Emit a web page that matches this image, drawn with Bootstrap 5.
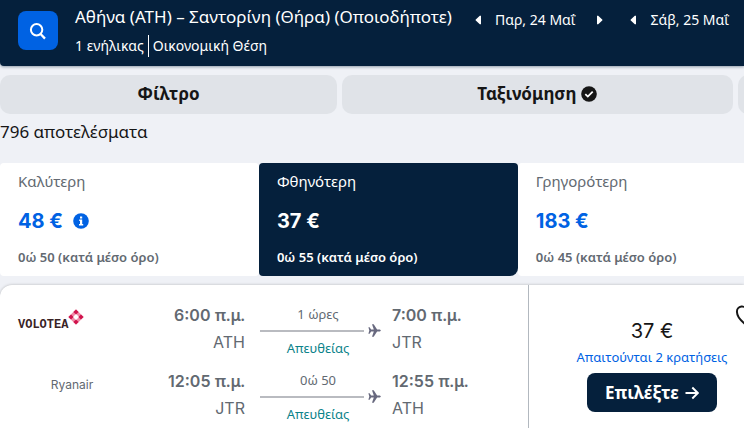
<!DOCTYPE html>
<html lang="el">
<head>
<meta charset="utf-8">
<meta name="viewport" content="width=device-width, initial-scale=1">
<title>Αθήνα – Σαντορίνη</title>
<link href="https://cdn.jsdelivr.net/npm/bootstrap@5.3.0/dist/css/bootstrap.min.css" rel="stylesheet">
<style>
  :root { --navy: #05203c; --blue: #0062e3; --grey: #626971; --page: #eff1f6; }
  body { background: var(--page); color: #161616; font-family: "Noto Sans", sans-serif; font-size: 16px; line-height: 24px; overflow: hidden; }
  svg { display: block; flex: none; }
  .num { font-family: Inter, "Noto Sans", sans-serif; }
  .top-bar { background: var(--navy); padding: 4px 0 9px 18px; box-shadow: 0 1px 3px #05203c66; border-bottom-left-radius: 4px; }
  .search-btn { width: 40px; height: 39px; padding: 0; margin-top: 7px; border-radius: 8px; background: var(--blue); color: #fff; }
  .trip { padding-left: 17px; width: 403px; }
  .trip-title { font-size: 17px; line-height: 26px; margin: 0; font-weight: 400; }
  .trip-info { font-size: 14px; line-height: 22px; margin-top: 5px; }
  .trip-info span + span { border-left: 1px solid #fff; padding-left: 4px; margin-left: 4px; }
  .dates { font-size: 14px; line-height: 20px; margin-top: 6px; }
  .date-nav { width: 34px; height: 20px; padding: 0; border: 0; background: none; color: #fff; }
  .date-next { margin-left: 7px; }
  .pills { gap: 5px; padding-top: 9px; }
  .pill { height: 39px; border: 0; border-radius: 10px; background: #e0e3e8; color: #161616; font-weight: 700; font-size: 17px; line-height: 22px; padding: 0 0 2px; flex: none; gap: 5px; }
  .pill-a { width: 45.3%; }
  .pill-b { width: 52.5%; }
  .results { margin: 6px 0 19px; font-size: 17px; }
  .sort-tab { flex: 0 0 34.8%; border: 0; background: #fff; color: var(--grey); text-align: left; padding: 7px 18px 9px; border-radius: 4px; height: 113px; }
  .sort-tab .kind { font-size: 15px; line-height: 20px; }
  .sort-tab .cost { font-size: 20px; line-height: 28px; font-weight: 700; color: var(--blue); margin-top: 16px; gap: 10px; }
  .sort-tab .avg { font-size: 13px; line-height: 18px; font-weight: 600; margin-top: 13px; }
  .sort-tab.active { background: var(--navy); color: #fff; border-radius: 4px 4px 8px 4px; }
  .sort-tab.active .cost { color: #fff; }
  .ticket { margin-top: 9px; background: #fff; border-radius: 12px 0 0 0; box-shadow: 0 0 3px #00000040; }
  .legs { flex: 0 0 71.1%; border-right: 1px solid #b2b8bf; padding: 18px 0 0 18px; color: var(--grey); }
  .leg { height: 66px; }
  .carrier { width: 108px; padding-top: 6px; }
  .brand { font: 700 12px/16px "Liberation Mono", monospace; color: #3a2326; padding-top: 8px; }
  .operator { font-size: 12px; line-height: 20px; text-align: center; }
  .stop { line-height: 24px; }
  .stop-time { font-weight: 600; }
  .stop-code { line-height: 30px; }
  .depart { width: 119px; text-align: right; }
  .path { width: 121px; margin: 0 11px 0 15px; font-size: 13px; line-height: 20px; padding-top: 1px; }
  .path-label { width: 116px; text-align: center; }
  .path-line { height: 2px; background: #b9bbc0; margin-right: 4px; }
  .direct { color: #0c838a; padding-top: 1px; }
  .buy { width: 246px; flex: none; position: relative; padding-top: 32px; }
  .total { font-size: 20px; line-height: 28px; }
  .need { font-size: 13px; line-height: 18px; color: var(--blue); padding-top: 3px; }
  .choose { background: var(--navy); color: #fff; font-weight: 700; font-size: 17px; width: 130px; height: 39px; border-radius: 8px; padding: 0; border: 0; margin-top: 7px; gap: 6px; }
  .save { position: absolute; top: 19px; right: 16px; padding: 0; border: 0; background: none; color: #161616; }
</style>
<script src="https://cdn.jsdelivr.net/npm/bootstrap@5.3.0/dist/js/bootstrap.bundle.min.js"></script>
</head>
<body>
<header class="top-bar d-flex text-white align-items-start">
  <button class="btn search-btn d-flex align-items-center justify-content-center flex-shrink-0" aria-label="Αναζήτηση">
    <svg width="18" height="18" viewBox="0 0 18 18" fill="none" stroke="currentColor" stroke-width="2"><circle cx="7.6" cy="7.8" r="5.7"/><path d="M11.6 12 16 16.6" stroke-width="2.3"/></svg>
  </button>
  <div class="trip flex-shrink-0 text-nowrap">
    <h1 class="trip-title">Αθήνα (ATH) – Σαντορίνη (Θήρα) (Οποιοδήποτε)</h1>
    <div class="trip-info d-flex"><span>1 ενήλικας</span><span>Οικονομική Θέση</span></div>
  </div>
  <div class="dates d-flex flex-shrink-0 text-nowrap">
    <button class="date-nav d-flex align-items-center justify-content-center" aria-label="Προηγούμενη"><svg width="7" height="10" viewBox="0 0 7 10"><path d="M6 .8v8.4H4.8L.8 5.6a.8.8 0 0 1 0-1.2L4.8.8z" fill="currentColor"/></svg></button>
    <span>Παρ, 24 Μαΐ</span>
    <button class="date-nav date-next d-flex align-items-center justify-content-center" aria-label="Επόμενη"><svg width="7" height="10" viewBox="0 0 7 10"><path d="M1 .8v8.4h1.2l4-3.6a.8.8 0 0 0 0-1.2l-4-3.6z" fill="currentColor"/></svg></button>
    <button class="date-nav d-flex align-items-center justify-content-center" aria-label="Προηγούμενη"><svg width="7" height="10" viewBox="0 0 7 10"><path d="M6 .8v8.4H4.8L.8 5.6a.8.8 0 0 1 0-1.2L4.8.8z" fill="currentColor"/></svg></button>
    <span>Σάβ, 25 Μαΐ</span>
  </div>
</header>
<main class="overflow-hidden">
  <div class="pills d-flex">
    <button class="pill pill-a">Φίλτρο</button>
    <button class="pill pill-b d-flex align-items-center justify-content-center">Ταξινόμηση
      <svg width="16" height="16" viewBox="0 0 16 16"><circle cx="8" cy="8" r="7.8" fill="#161616"/><path d="m4.3 8.2 2.5 2.4 4.9-5" fill="none" stroke="#fff" stroke-width="1.8"/></svg>
    </button>
    <button class="pill pill-a" aria-label="Περισσότερα"></button>
  </div>
  <p class="results">796 αποτελέσματα</p>
  <div class="d-flex">
    <button class="sort-tab">
      <div class="kind">Καλύτερη</div>
      <div class="cost num d-flex align-items-center">48 €
        <svg width="16" height="16" viewBox="0 0 16 16"><circle cx="8" cy="8" r="7.8" fill="#0062e3"/><path d="M7 3.4h2.2v2H7zM6.2 6.6h3v4.4h1v1.5H6V11h1V8.1h-.8z" fill="#fff"/></svg>
      </div>
      <div class="avg">0ώ 50 (κατά μέσο όρο)</div>
    </button>
    <button class="sort-tab active">
      <div class="kind">Φθηνότερη</div>
      <div class="cost num">37 €</div>
      <div class="avg">0ώ 55 (κατά μέσο όρο)</div>
    </button>
    <button class="sort-tab">
      <div class="kind">Γρηγορότερη</div>
      <div class="cost num">183 €</div>
      <div class="avg">0ώ 45 (κατά μέσο όρο)</div>
    </button>
  </div>
  <article class="ticket d-flex">
    <div class="legs">
      <div class="leg d-flex">
        <div class="carrier d-flex align-items-start"><span class="brand">VOLOTEA</span>
          <svg width="16" height="16" viewBox="0 0 16 16"><path d="M8 2.6 13.4 8 8 13.4 2.600 8z" fill="none" stroke="#f08ba8" stroke-width="3.200"/><g fill="#d0134c"><path d="m8 .4 2.6 2.600L8 5.600 5.400 3zM8 10.400l2.600 2.600L8 15.600l-2.600-2.600zM3 5.400 5.600 8 3 10.600.4 8zM13 5.400 15.600 8 13 10.600 10.400 8z"/></g></svg>
        </div>
        <div class="stop depart"><div class="stop-time"><span class="num">6:00</span> π.μ.</div><div class="stop-code num">ATH</div></div>
        <div class="path"><div class="path-label">1 ώρες</div>
          <div class="d-flex align-items-center"><div class="path-line flex-grow-1"></div><svg width="13" height="13" viewBox="0 0 13 13"><path d="M.4 3.300h1.200l1.500 2.300h2.700L4 .300h1.700l3.400 5.300h2.700q1 .3 1 .9t-1 .9H9.100l-3.400 5.300H4l1.800-5.300H3.100L1.600 9.700H.4l.9-3.200z" fill="#68697f"/></svg></div>
          <div class="path-label direct">Απευθείας</div></div>
        <div class="stop"><div class="stop-time"><span class="num">7:00</span> π.μ.</div><div class="stop-code num">JTR</div></div>
      </div>
      <div class="leg d-flex">
        <div class="carrier"><div class="operator num">Ryanair</div></div>
        <div class="stop depart"><div class="stop-time"><span class="num">12:05</span> π.μ.</div><div class="stop-code num">JTR</div></div>
        <div class="path"><div class="path-label">0ώ 50</div>
          <div class="d-flex align-items-center"><div class="path-line flex-grow-1"></div><svg width="13" height="13" viewBox="0 0 13 13"><path d="M.4 3.300h1.200l1.500 2.300h2.700L4 .300h1.700l3.400 5.300h2.700q1 .3 1 .9t-1 .9H9.100l-3.400 5.300H4l1.800-5.300H3.100L1.600 9.700H.4l.9-3.200z" fill="#68697f"/></svg></div>
          <div class="path-label direct">Απευθείας</div></div>
        <div class="stop"><div class="stop-time"><span class="num">12:55</span> π.μ.</div><div class="stop-code num">ATH</div></div>
      </div>
    </div>
    <div class="buy d-flex flex-column align-items-center">
      <button class="save" aria-label="Αποθήκευση"><svg width="24" height="24" viewBox="0 0 24 24" fill="none" stroke="currentColor" stroke-width="2"><path d="M12 21.500C8 18.500 2 14 2 8.200A5 5 0 0 1 12 7a5 5 0 0 1 10 1.200C22 14 16 18.500 12 21.500z"/></svg></button>
      <div class="total num">37 €</div>
      <div class="need">Απαιτούνται 2 κρατήσεις</div>
      <button class="choose d-flex align-items-center justify-content-center">Επιλέξτε
        <svg width="14" height="14" viewBox="0 0 14 14" fill="none" stroke="currentColor" stroke-width="1.900"><path d="M.5 7h12M7.300 1.500 12.800 7l-5.500 5.500"/></svg>
      </button>
    </div>
  </article>
</main>
</body>
</html>
